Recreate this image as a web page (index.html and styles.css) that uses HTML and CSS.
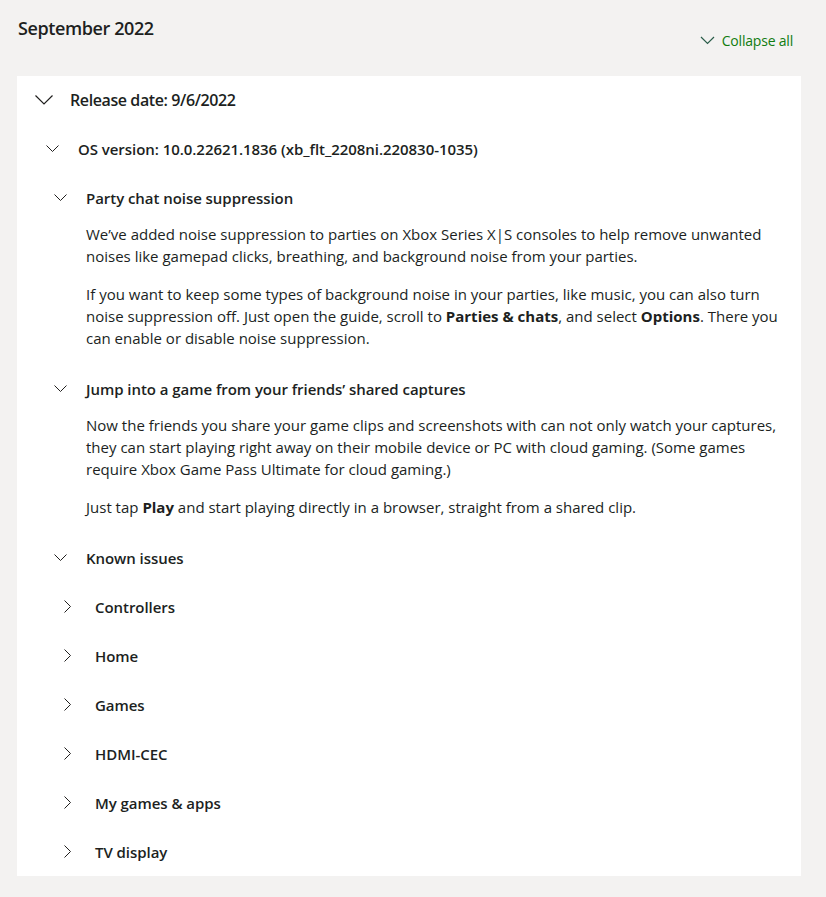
FILE: index.html
```html
<!DOCTYPE html>
<html lang="en">
<head>
<meta charset="utf-8">
<title>Xbox release notes</title>
<link rel="stylesheet" href="styles.css">
</head>
<body>
<div class="page">
  <div class="top">
    <h2 class="month">September 2022</h2>
    <button class="collapse-all">
      <svg class="ico-collapse" width="15" height="9" viewBox="0 0 15 9"><path d="M1 1l6.5 6.5L14 1" fill="none" stroke="currentColor" stroke-width="1.2"/></svg>
      <span>Collapse all</span>
    </button>
  </div>
  <div class="card">
    <div class="row row-release">
      <svg class="chev-lg" width="18" height="10" viewBox="0 0 18 10"><path d="M0.5 0.5l8.5 8.5 8.5-8.5" fill="none" stroke="#201f1e" stroke-width="1.2"/></svg>
      <h3 class="release">Release date: 9/6/2022</h3>
    </div>
    <div class="row row-os">
      <svg class="chev-sm" width="13" height="7" viewBox="0 0 13 7"><path d="M0.5 0.5l6 6 6-6" fill="none" stroke="#201f1e" stroke-width="1"/></svg>
      <h4 class="heading">OS version: 10.0.22621.1836 (xb_flt_2208ni.220830-1035)</h4>
    </div>
    <div class="section">
      <div class="row row-sub">
        <svg class="chev-sm" width="13" height="7" viewBox="0 0 13 7"><path d="M0.5 0.5l6 6 6-6" fill="none" stroke="#201f1e" stroke-width="1"/></svg>
        <h5 class="heading">Party chat noise suppression</h5>
      </div>
      <div class="body">
        <p>We’ve added noise suppression to parties on Xbox Series X|S consoles to help remove unwanted noises like gamepad clicks, breathing, and background noise from your parties.</p>
        <p>If you want to keep some types of background noise in your parties, like music, you can also turn noise suppression off. Just open the guide, scroll to <b>Parties &amp; chats</b>, and select <b>Options</b>. There you can enable or disable noise suppression.</p>
      </div>
    </div>
    <div class="section">
      <div class="row row-sub">
        <svg class="chev-sm" width="13" height="7" viewBox="0 0 13 7"><path d="M0.5 0.5l6 6 6-6" fill="none" stroke="#201f1e" stroke-width="1"/></svg>
        <h5 class="heading">Jump into a game from your friends’ shared captures</h5>
      </div>
      <div class="body">
        <p>Now the friends you share your game clips and screenshots with can not only watch your captures, they can start playing right away on their mobile device or PC with cloud gaming. (Some games require Xbox Game Pass Ultimate for cloud gaming.)</p>
        <p>Just tap <b>Play</b> and start playing directly in a browser, straight from a shared clip.</p>
      </div>
    </div>
    <div class="section">
      <div class="row row-sub">
        <svg class="chev-sm" width="13" height="7" viewBox="0 0 13 7"><path d="M0.5 0.5l6 6 6-6" fill="none" stroke="#201f1e" stroke-width="1"/></svg>
        <h5 class="heading">Known issues</h5>
      </div>
      <ul class="issues">
        <li class="row row-issue"><svg class="chev-r" width="7" height="13" viewBox="0 0 7 13"><path d="M0.5 0.5l6 6-6 6" fill="none" stroke="#201f1e" stroke-width="1"/></svg><span class="heading">Controllers</span></li>
        <li class="row row-issue"><svg class="chev-r" width="7" height="13" viewBox="0 0 7 13"><path d="M0.5 0.5l6 6-6 6" fill="none" stroke="#201f1e" stroke-width="1"/></svg><span class="heading">Home</span></li>
        <li class="row row-issue"><svg class="chev-r" width="7" height="13" viewBox="0 0 7 13"><path d="M0.5 0.5l6 6-6 6" fill="none" stroke="#201f1e" stroke-width="1"/></svg><span class="heading">Games</span></li>
        <li class="row row-issue"><svg class="chev-r" width="7" height="13" viewBox="0 0 7 13"><path d="M0.5 0.5l6 6-6 6" fill="none" stroke="#201f1e" stroke-width="1"/></svg><span class="heading">HDMI-CEC</span></li>
        <li class="row row-issue"><svg class="chev-r" width="7" height="13" viewBox="0 0 7 13"><path d="M0.5 0.5l6 6-6 6" fill="none" stroke="#201f1e" stroke-width="1"/></svg><span class="heading">My games &amp; apps</span></li>
        <li class="row row-issue"><svg class="chev-r" width="7" height="13" viewBox="0 0 7 13"><path d="M0.5 0.5l6 6-6 6" fill="none" stroke="#201f1e" stroke-width="1"/></svg><span class="heading">TV display</span></li>
      </ul>
    </div>
  </div>
</div>
</body>
</html>
```
FILE: styles.css
```css
html, body {
  margin: 0;
  padding: 0;
  background: #f3f2f1;
}
body {
  font-family: "Open Sans", "Noto Sans", sans-serif;
  color: #201f1e;
  font-size: 15px;
}
.page {
  padding: 15px 25px 20px 17px;
}
.top {
  display: flex;
  justify-content: space-between;
  align-items: flex-start;
  height: 61px;
}
.month {
  margin: 0 0 0 1px;
  font-size: 18px;
  font-weight: 600;
  line-height: 26px;
  letter-spacing: -0.4px;
}
.collapse-all {
  margin-top: 16px;
  margin-right: 8px;
  display: flex;
  align-items: center;
  gap: 7px;
  background: none;
  border: 0;
  padding: 0;
  font: inherit;
  font-size: 14px;
  color: #107c10;
  letter-spacing: -0.2px;
}
.ico-collapse { color: #2a5d4a; }
.card {
  background: #fff;
  padding: 0 15px 0 17px;
}
.row {
  display: flex;
  align-items: center;
  height: 49px;
}
.row-release { height: 48px; }
.release {
  margin: 0 0 0 17px;
  font-size: 16px;
  font-weight: 600;
  letter-spacing: -0.4px;
}
.chev-lg { margin-left: 1px; }
.row-os { padding-left: 12px; }
.row-os .heading { margin-left: 19px; }
.row-sub { padding-left: 20px; }
.row-sub .heading { margin-left: 19px; }
.heading {
  margin: 0;
  font-size: 15px;
  font-weight: 600;
  letter-spacing: -0.05px;
}
.body {
  padding-left: 52px;
  padding-top: 1px;
}
.body p {
  margin: 0 0 16px;
  line-height: 22px;
  letter-spacing: 0;
}
.body p:last-child { margin-bottom: 15px; }
.issues {
  list-style: none;
  margin: 0;
  padding: 0 0 0 30px;
}
.row-issue .heading { margin-left: 24px; }
```
